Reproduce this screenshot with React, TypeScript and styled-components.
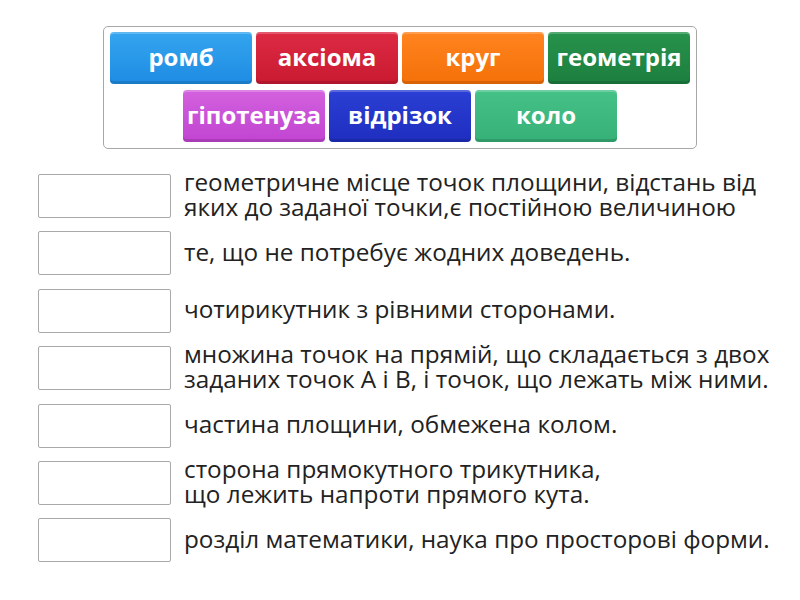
import React from 'react';
import styled, { createGlobalStyle } from 'styled-components';

const GlobalStyle = createGlobalStyle`
  body {
    margin: 0;
    background: #ffffff;
    font-family: "Open Sans", "Noto Sans", sans-serif;
  }
`;

const Page = styled.div`
  width: 800px;
  height: 600px;
  padding-top: 26px;
  box-sizing: border-box;
`;

const Bank = styled.div`
  width: 594px;
  margin: 0 auto;
  box-sizing: border-box;
  border: 1px solid #a8a8a8;
  border-radius: 5px;
  padding: 5px 6px 6px;
  display: flex;
  flex-wrap: wrap;
  justify-content: center;
  gap: 6px 4px;
`;

const Tile = styled.div<{ $top: string; $bottom: string }>`
  width: 142px;
  height: 52px;
  box-sizing: border-box;
  border-radius: 4px;
  background: linear-gradient(${p => p.$top}, ${p => p.$bottom});
  box-shadow: inset 0 2px 0 rgba(255, 255, 255, 0.22), inset 0 -3px 0 rgba(0, 0, 0, 0.12);
  display: flex;
  align-items: center;
  justify-content: center;
  color: #ffffff;
  font-weight: 700;
  font-size: 24px;
  white-space: nowrap;
  padding-bottom: 3px;
`;

const List = styled.div`
  margin-top: 25px;
  padding-left: 38px;
  display: flex;
  flex-direction: column;
  gap: 13.4px;
`;

const Row = styled.div`
  display: flex;
  align-items: center;
  height: 44px;
`;

const Slot = styled.div`
  width: 133px;
  height: 44px;
  box-sizing: border-box;
  border: 1px solid #a9a9a9;
  border-radius: 2px;
  flex-shrink: 0;
`;

const Clue = styled.div`
  margin-left: 13px;
  font-size: 24.3px;
  line-height: 25px;
  color: #222222;
  margin-top: -4.5px;
  white-space: nowrap;
`;

const tiles = [
  { text: 'ромб', top: '#34a5ef', bottom: '#1e8ce3' },
  { text: 'аксіома', top: '#dc2a43', bottom: '#c91a31' },
  { text: 'круг', top: '#ff8420', bottom: '#f57008' },
  { text: 'геометрія', top: '#26934c', bottom: '#1d7e3f' },
  { text: 'гіпотенуза', top: '#d361de', bottom: '#c144d1' },
  { text: 'відрізок', top: '#2b3fd4', bottom: '#1e2ebf' },
  { text: 'коло', top: '#45c288', bottom: '#36b077' },
];

const clues = [
  ['геометричне місце точок площини, відстань від', 'яких до заданої точки,є постійною величиною'],
  ['те, що не потребує жодних доведень.'],
  ['чотирикутник з рівними сторонами.'],
  ['множина точок на прямій, що складається з двох', 'заданих точок A і B, і точок, що лежать між ними.'],
  ['частина площини, обмежена колом.'],
  ['сторона прямокутного трикутника,', 'що лежить напроти прямого кута.'],
  ['розділ математики, наука про просторові форми.'],
];

export default function App() {
  return (
    <Page>
      <GlobalStyle />
      <Bank>
        {tiles.map(t => (
          <Tile key={t.text} $top={t.top} $bottom={t.bottom}>{t.text}</Tile>
        ))}
      </Bank>
      <List>
        {clues.map((lines, i) => (
          <Row key={i}>
            <Slot />
            <Clue>
              {lines.map((l, j) => <div key={j}>{l}</div>)}
            </Clue>
          </Row>
        ))}
      </List>
    </Page>
  );
}
